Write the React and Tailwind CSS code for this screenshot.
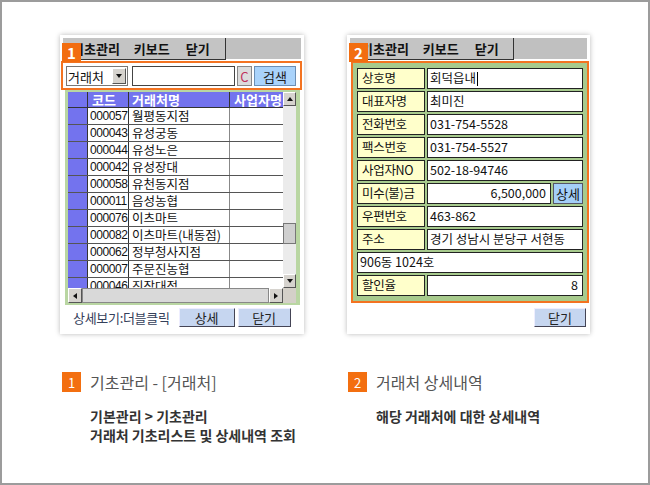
import React from 'react';

const rows = [
  ['000057', '월평동지점'],
  ['000043', '유성궁동'],
  ['000044', '유성노은'],
  ['000042', '유성장대'],
  ['000058', '유천동지점'],
  ['000011', '음성농협'],
  ['000076', '이츠마트'],
  ['000082', '이츠마트(내동점)'],
  ['000062', '정부청사지점'],
  ['000007', '주문진농협'],
  ['000046', '진잠대점'],
];

const details = [
  ['상호명', '회덕읍내', 'caret'],
  ['대표자명', '최미진'],
  ['전화번호', '031-754-5528'],
  ['팩스번호', '031-754-5527'],
  ['사업자NO', '502-18-94746'],
  ['미수(불)금', '6,500,000', 'button'],
  ['우편번호', '463-862'],
  ['주소', '경기 성남시 분당구 서현동'],
  [null, '906동 1024호'],
  ['할인율', '8', 'right'],
];

const font = { fontFamily: '"Noto Sans CJK KR", "Noto Sans", sans-serif' };
const digits = { fontFamily: '"Liberation Sans", "Noto Sans CJK KR", sans-serif' };

function Tri({ dir }) {
  const pts = {
    up: '1,6 4,2 7,6',
    down: '1,2 4,6 7,2',
    left: '6,1 2,4 6,7',
    right: '2,1 6,4 2,7',
  }[dir];
  return (
    <svg width="8" height="8" viewBox="0 0 8 8">
      <polygon points={pts} fill="#111" />
    </svg>
  );
}

function ScrollBtn({ dir, className = '' }) {
  return (
    <div className={`flex items-center justify-center bg-[#d6d3ce] border border-t-white border-l-white border-r-[#555] border-b-[#555] ${className}`}>
      <Tri dir={dir} />
    </div>
  );
}

function MenuBar({ badge, offsets }) {
  return (
    <div className="relative h-[21px] bg-[#c0c0c0] flex shrink-0">
      <div className={`h-[22px] ${offsets.w} border-r border-b border-[#333] bg-[#c4c4c4] flex items-center text-[13px] font-bold text-[#111] leading-none`}>
        <span className={offsets.a}>기초관리</span>
        <span className="ml-[14px]">키보드</span>
        <span className="ml-[16px]">닫기</span>
      </div>
      <div className="absolute left-[-1px] top-[5px] w-[19px] h-[19px] bg-[#f26d10] text-white text-[15px] font-bold flex items-center justify-center leading-none">
        {badge}
      </div>
    </div>
  );
}

function LeftWindow() {
  return (
    <div className="w-[244px] h-[299px] bg-white shadow-[0_0_5px_rgba(0,0,0,0.28)] p-[3px] flex flex-col">
      <MenuBar badge="1" offsets={{ w: 'w-[163px]', a: 'ml-[9px]' }} />
      <div className="mt-[2px] ml-[-2px] w-[241px] h-[29px] border-2 border-[#f37321] pl-[3px] pt-[3px] flex items-start">
        <div className="w-[62px] h-[20px] bg-white border border-[#777] flex items-center justify-between pl-[1px] pr-[1px]">
          <span className="text-[13px] leading-none text-[#111]">거래처</span>
          <ScrollBtn dir="down" className="w-[14px] h-[16px]" />
        </div>
        <div className="ml-[4px] w-[103px] h-[20px] bg-white border border-[#444]" />
        <div className="ml-[2px] w-[15px] h-[20px] bg-[#dcdcdc] border border-[#888] flex items-center justify-center text-[13px] text-[#c0305a] leading-none">C</div>
        <div className="ml-[2px] w-[42px] h-[20px] bg-[#a9d3fb] border border-[#6b8fb5] flex items-center justify-center text-[13px] text-[#222] leading-none">검색</div>
      </div>
      <div className="ml-[2px] w-[235px] h-[215px] bg-[#b9d6a2] pl-[3px] pr-[4px] pt-[2px] pb-[2px] flex flex-col">
        <div className="flex h-[196px]">
          <div className="w-[215px] h-[196px] overflow-hidden bg-white">
            <div className="flex h-[16px] bg-[#7373ee] text-white text-[13px] font-bold leading-[16px] border-b border-[#333]">
              <div className="w-[20px] border-r border-[#333]" />
              <div className="w-[41px] pl-[4px] border-r border-[#333] overflow-hidden whitespace-nowrap">코드</div>
              <div className="w-[101px] pl-[3px] border-r border-[#333] overflow-hidden whitespace-nowrap">거래처명</div>
              <div className="w-[53px] pl-[4px] overflow-hidden whitespace-nowrap">사업자명</div>
            </div>
            {rows.map(([code, name]) => (
              <div key={code} className="flex h-[17px] border-b border-[#555] text-[12.5px] leading-[16px] text-[#111]">
                <div className="w-[20px] bg-[#7373ee] border-r border-[#333]" />
                <div style={digits} className="w-[41px] pl-[2px] border-r border-[#333] text-[12px] tracking-[-0.4px] overflow-hidden whitespace-nowrap">{code}</div>
                <div className="w-[101px] pl-[3px] border-r border-[#888] overflow-hidden whitespace-nowrap">{name}</div>
                <div className="w-[53px]" />
              </div>
            ))}
          </div>
          <div className="w-[13px] h-[196px] bg-[#ebebeb] flex flex-col">
            <ScrollBtn dir="up" className="h-[14px]" />
            <div className="mt-[117px] h-[21px] bg-[#cfcfcf] border border-[#777]" />
            <div className="flex-1" />
            <ScrollBtn dir="down" className="h-[14px]" />
          </div>
        </div>
        <div className="flex h-[15px] bg-[#ebebeb]">
          <ScrollBtn dir="left" className="w-[14px]" />
          <div className="w-[187px] bg-[#d9d9d9] border border-[#888]" />
          <ScrollBtn dir="right" className="w-[14px]" />
          <div className="w-[13px] bg-[#d4d0c8]" />
        </div>
      </div>
      <div className="flex items-center mt-[3px] h-[19px] pl-[10px]">
        <span className="text-[13px] leading-none text-[#34405a] tracking-[-0.3px]">상세보기:더블클릭</span>
        <div className="ml-[9px] w-[56px] h-[19px] bg-[#c6d6f0] border border-t-[#eef] border-l-[#eef] border-r-[#445] border-b-[#445] flex items-center justify-center text-[13px] leading-none text-[#222]">상세</div>
        <div className="ml-[3px] w-[53px] h-[19px] bg-[#c6d6f0] border border-t-[#eef] border-l-[#eef] border-r-[#445] border-b-[#445] flex items-center justify-center text-[13px] leading-none text-[#222]">닫기</div>
      </div>
    </div>
  );
}

function RightWindow() {
  return (
    <div className="w-[243px] h-[299px] bg-white shadow-[0_0_5px_rgba(0,0,0,0.28)] p-[3px] flex flex-col">
      <MenuBar badge="2" offsets={{ w: 'w-[164px]', a: 'ml-[11px]' }} />
      <div className="mt-[2px] ml-[1px] w-[238px] h-[242px] border-2 border-[#f37321] bg-[#a7ca8d] px-[4px] pt-[5px] flex flex-col gap-[2px]">
        {details.map(([label, value, kind]) => (
          <div key={value} className="flex h-[21px] gap-[2px] text-[12.5px] leading-none text-[#111]">
            {label && (
              <div className="w-[68px] bg-[#ffffcb] border border-[#222] flex items-center pl-[4px] tracking-[-0.3px] whitespace-nowrap">{label}</div>
            )}
            <div className={`flex-1 bg-white border border-[#222] flex items-center ${kind === 'right' || kind === 'button' ? 'justify-end pr-[4px]' : 'pl-[2px]'} whitespace-nowrap`}>
              {value}
              {kind === 'caret' && <span className="ml-[1px] w-[1px] h-[14px] bg-black" />}
            </div>
            {kind === 'button' && (
              <div className="w-[30px] bg-[#a4cff8] border border-[#556] flex items-center justify-center text-[13px]">상세</div>
            )}
          </div>
        ))}
      </div>
      <div className="flex justify-end mt-[5px] pr-[1px]">
        <div className="w-[52px] h-[19px] bg-[#c6d6f0] border border-t-[#eef] border-l-[#eef] border-r-[#445] border-b-[#445] flex items-center justify-center text-[13px] leading-none text-[#222]">닫기</div>
      </div>
    </div>
  );
}

function Caption({ n, title, lines, className }) {
  return (
    <div className={className}>
      <div className="flex items-center h-[20px]">
        <div className="w-[19px] h-[20px] bg-[#f36f10] text-white text-[13px] flex items-center justify-center leading-none">{n}</div>
        <div className="ml-[9px] text-[16px] text-[#555] leading-none">{title}</div>
      </div>
      <div className="mt-[15px] pl-[28px] text-[14px] font-bold text-[#333] leading-[19px]">
        {lines.map((l) => (
          <div key={l}>{l}</div>
        ))}
      </div>
    </div>
  );
}

export default function App() {
  return (
    <div style={font} className="w-[650px] h-[485px] border-2 border-[#9c9c9c] bg-white">
      <div className="flex pl-[58px] pt-[33px] gap-[43px]">
        <LeftWindow />
        <RightWindow />
      </div>
      <div className="flex mt-[38px]">
        <Caption
          n="1"
          title="기초관리 - [거래처]"
          lines={['기본관리 > 기초관리', '거래처 기초리스트 및 상세내역 조회']}
          className="ml-[60px] w-[286px]"
        />
        <Caption n="2" title="거래처 상세내역" lines={['해당 거래처에 대한 상세내역']} className="" />
      </div>
    </div>
  );
}
